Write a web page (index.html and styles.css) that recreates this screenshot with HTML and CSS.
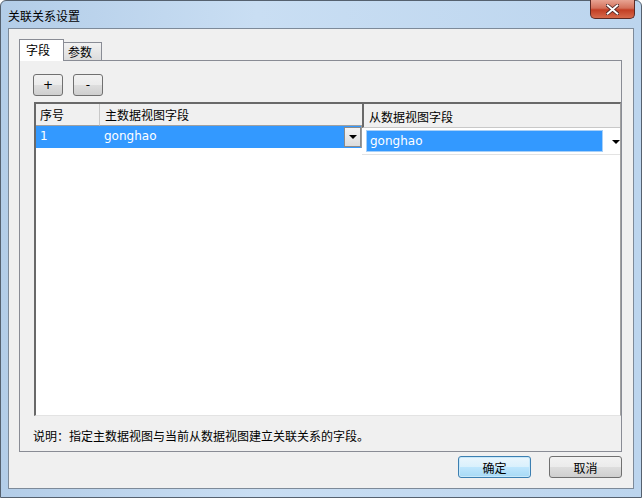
FILE: index.html
```html
<!DOCTYPE html>
<html>
<head>
    <title>关联关系设置</title>
    <link rel="stylesheet" href="styles.css">
</head>
<body>
    <div class="window">
        <div class="titlebar">
            <span class="title">关联关系设置</span>
            <div class="close-btn">
                <svg width="13" height="11" viewBox="0 0 13 11">
                    <path d="M1 1 L12 10 M12 1 L1 10" stroke="#4a2020" stroke-width="3.6" stroke-linecap="round"/>
                    <path d="M1.5 1.3 L11.5 9.7 M11.5 1.3 L1.5 9.7" stroke="#fff" stroke-width="2" stroke-linecap="round"/>
                </svg>
            </div>
        </div>
        <div class="client">
            <div class="tabs">
                <div class="tab active">字段</div>
                <div class="tab">参数</div>
            </div>
            <div class="tab-page">
                <div class="toolbar">
                    <button class="btn small">+</button>
                    <button class="btn small">-</button>
                </div>
                <div class="grid">
                    <div class="grid-head">
                        <div class="cell c1">序号</div>
                        <div class="cell c2">主数据视图字段</div>
                        <div class="cell c3">从数据视图字段</div>
                    </div>
                    <div class="grid-row">
                        <div class="cell c1 selected">1</div>
                        <div class="cell c2 selected">
                            <span class="value">gonghao</span>
                            <span class="drop-btn"><i class="arrow"></i></span>
                        </div>
                        <div class="cell c3">
                            <span class="combo">gonghao</span>
                            <i class="arrow"></i>
                        </div>
                    </div>
                </div>
                <div class="note">说明：指定主数据视图与当前从数据视图建立关联关系的字段。</div>
            </div>
            <div class="footer">
                <button class="btn wide default">确定</button>
                <button class="btn wide">取消</button>
            </div>
        </div>
    </div>
</body>
</html>
```

FILE: styles.css
```css
* {
    box-sizing: border-box;
}
body {
    margin: 0;
    font-family: "DejaVu Sans", "Noto Sans CJK SC", sans-serif;
    font-size: 12px;
    color: #000;
    background: #fff;
}
.window {
    width: 642px;
    height: 498px;
    background: linear-gradient(to right, #b3cde8, #c9def3 40%, #bcd5ee);
    border: 1px solid #55616f;
    border-radius: 6px 6px 0 0;
    padding: 0 7px 8px 7px;
    display: flex;
    flex-direction: column;
}
.titlebar {
    height: 27px;
    display: flex;
    align-items: center;
    justify-content: space-between;
    flex-shrink: 0;
}
.title {
    font-family: "Noto Sans CJK SC", sans-serif;
    font-size: 12px;
    line-height: 12px;
    margin-top: 2px;
    color: #000;
}
.close-btn {
    width: 45px;
    height: 19px;
    align-self: flex-start;
    margin-top: -1px;
    margin-right: -1px;
    border: 1px solid #5d2a24;
    border-top: none;
    border-radius: 0 0 5px 5px;
    background: linear-gradient(to bottom, #e8a493, #d3705a 45%, #c23e24 55%, #d66a4c);
    display: flex;
    align-items: center;
    justify-content: center;
}
.client {
    flex: 1;
    background: #f0f0f0;
    border: 1px solid #7d8a99;
    padding: 12px 11px 0 10px;
    display: flex;
    flex-direction: column;
}
.tabs {
    display: flex;
    align-items: flex-end;
    height: 20px;
    margin-bottom: -1px;
    position: relative;
    z-index: 1;
}
.tab {
    font-family: "Noto Sans CJK SC", sans-serif;
    height: 19px;
    width: 38px;
    padding-left: 4px;
    line-height: 17px;
    border: 1px solid #898c95;
    border-left: none;
    background: linear-gradient(to bottom, #f2f2f2, #dcdcdc);
}
.tab.active {
    height: 22px;
    width: 45px;
    padding-left: 6px;
    line-height: 20px;
    border-left: 1px solid #898c95;
    border-bottom: none;
    background: #fff;
}
.tab-page {
    height: 392px;
    border: 1px solid #898c95;
    padding: 13px 0 0 13px;
    background: #f0f0f0;
}
.toolbar {
    display: flex;
    gap: 10px;
}
.btn {
    font-family: "Noto Sans CJK SC", sans-serif;
    font-size: 12px;
    height: 22px;
    padding: 0;
    border: 1px solid #707070;
    border-radius: 3px;
    background: linear-gradient(to bottom, #f2f2f2 0%, #ebebeb 50%, #dddddd 51%, #cfcfcf 100%);
    color: #000;
}
.btn.small {
    width: 30px;
    font-family: "DejaVu Sans", sans-serif;
}
.btn.wide {
    width: 73px;
}
.btn.default {
    border-color: #3c7fb1;
    background: linear-gradient(to bottom, #eaf6fd 0%, #d9f0fc 50%, #bee6fd 51%, #a7d9f5 100%);
    box-shadow: inset 0 0 0 1px #c7e8fa;
}
.grid {
    width: 587px;
    height: 314px;
    margin: 6px 0 0 1px;
    background: #fff;
    border-top: 2px solid #696969;
    border-left: 2px solid #696969;
    border-right: 1px solid #a0a0a0;
    border-bottom: 1px solid #e3e3e3;
}
.grid-head,
.grid-row {
    display: flex;
}
.cell {
    height: 22px;
    line-height: 21px;
    padding-left: 4px;
    white-space: nowrap;
}
.c1 {
    width: 64px;
    border-right: 1px solid #c8c8c8;
}
.c2 {
    width: 262px;
    border-right: 1px solid #c8c8c8;
}
.c3 {
    flex: 1;
}
.grid-head .cell {
    font-family: "Noto Sans CJK SC", sans-serif;
    background: #f0f0f0;
    border-bottom: 1px solid #a0a0a0;
}
.grid-head .c2 {
    padding-left: 5px;
    border-right: none;
}
.grid-head .c3 {
    height: 24px;
    padding-left: 5px;
    padding-top: 2px;
    border-left: 2px solid #696969;
    border-bottom: 1px solid #c8c8c8;
}
.grid-row .cell {
    height: 22px;
}
.grid-row .c1,
.grid-row .c2 {
    margin-top: -2px;
}
.selected {
    background: #3399ff;
    color: #fff;
    border-right: none;
}
.grid-row .c2 {
    display: flex;
    justify-content: space-between;
    padding-right: 0;
    padding-left: 4px;
    border-right: 1px solid #9a9a9a;
}
.drop-btn {
    width: 17px;
    height: 20px;
    margin-top: 1px;
    background: linear-gradient(to bottom, #f4f4f4, #dcdcdc);
    border: 1px solid #8a8a8a;
    display: flex;
    align-items: center;
    justify-content: center;
}
.arrow {
    width: 0;
    height: 0;
    border-left: 4px solid transparent;
    border-right: 4px solid transparent;
    border-top: 4px solid #000;
}
.grid-row .c3 {
    height: 27px;
    padding: 2px 0 0 4px;
    display: flex;
    align-items: flex-start;
    border-bottom: 1px solid #e3e3e3;
}
.combo {
    width: 237px;
    height: 22px;
    line-height: 21px;
    padding-left: 3px;
    background: #3399ff;
    color: #fff;
    border: 1px solid #a8d0f8;
}
.grid-row .c3 .arrow {
    margin: 10px 0 0 9px;
}
.note {
    font-family: "Noto Sans CJK SC", sans-serif;
    margin-top: 13px;
    line-height: 14px;
}
.footer {
    display: flex;
    justify-content: flex-end;
    gap: 18px;
    margin-top: 4px;
}
```
